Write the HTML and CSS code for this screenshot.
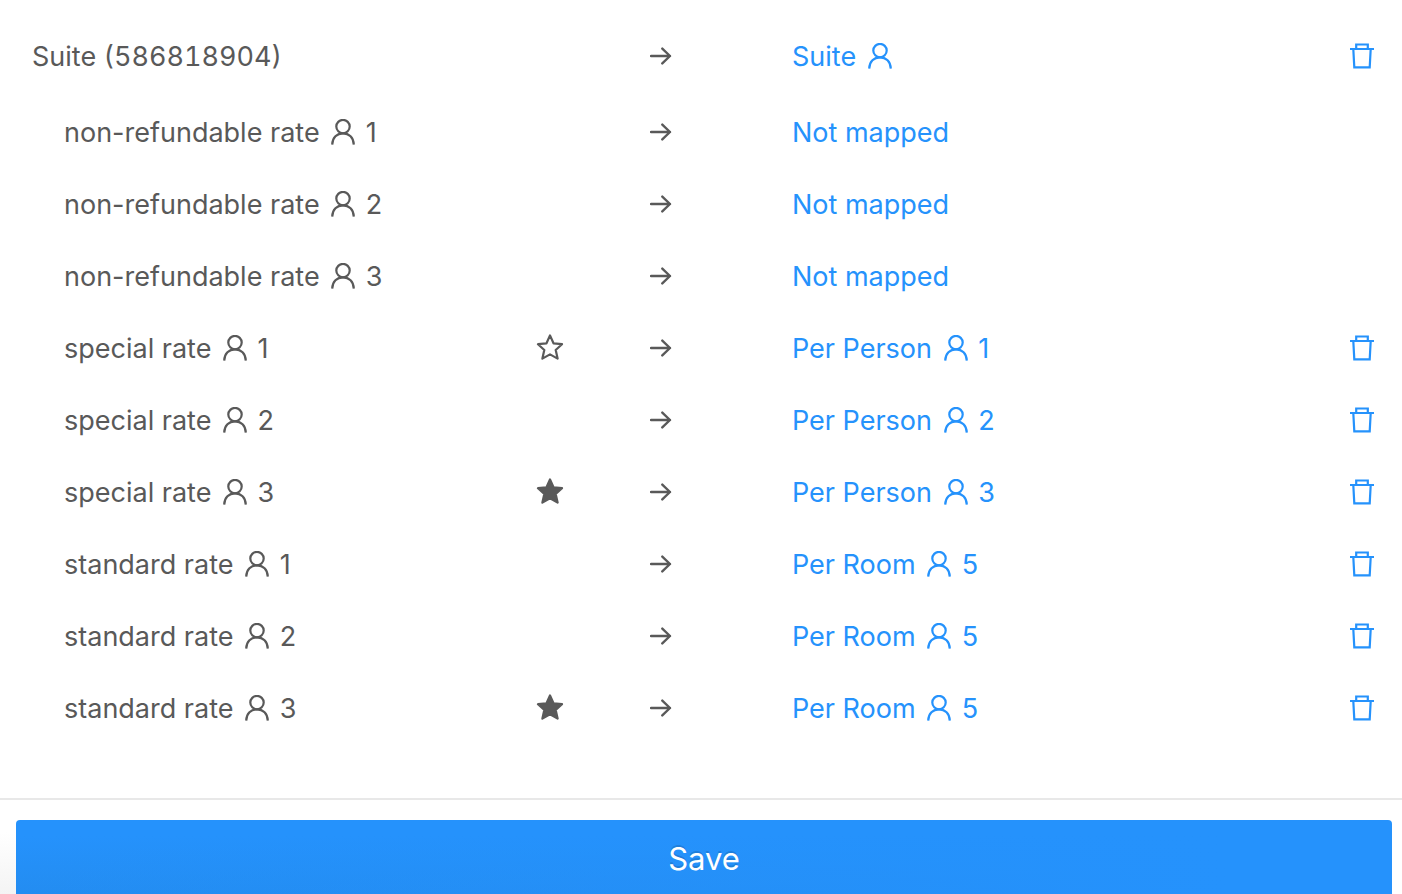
FILE: index.html
```html
<!DOCTYPE html>
<html lang="en">
<head>
<meta charset="utf-8">
<meta name="viewport" content="width=device-width, initial-scale=1">
<title>Rate mapping</title>
<link rel="stylesheet" href="styles.css">
</head>
<body>
<svg class="sprite" aria-hidden="true">
  <symbol id="person" viewBox="0 0 24 26"><circle cx="12" cy="7.6" r="6.7"/><path d="M1.2 25.6C1.4 18.6 6 14.3 12 14.3s10.600 4.300 10.800 11.300"/></symbol>
  <symbol id="arrow" viewBox="0 0 22 18"><path d="M1 9h19M12.300 1.600 20 9l-7.700 7.400"/></symbol>
  <symbol id="star" viewBox="0 0 28 28"><path d="M14 1.400l3.500 7.900 8.500 .9-6.300 5.800 1.900 8.600L14 20.400l-7.600 4.200 1.900-8.600L2 10.200l8.500-.9z"/></symbol>
  <symbol id="trash" viewBox="0 0 24 26"><path d="M0 6h24M6.200 6V1.500h11.600V6M3.300 6l1 18.300h15.400l1-18.300"/></symbol>
</svg>
<main class="page">
  <ul class="mapping">
    <li class="row row-room">
      <span class="source">Suite (586818904)</span>
      <svg class="arrow"><use href="#arrow"/></svg>
      <a class="target" href="#">Suite <svg class="person"><use href="#person"/></svg></a>
      <button class="icon-button remove" aria-label="Remove mapping"><svg class="trash"><use href="#trash"/></svg></button>
    </li>
    <li class="row">
      <span class="source">non-refundable rate <svg class="person"><use href="#person"/></svg> 1</span>
      <svg class="arrow"><use href="#arrow"/></svg>
      <a class="target" href="#">Not mapped</a>
    </li>
    <li class="row">
      <span class="source">non-refundable rate <svg class="person"><use href="#person"/></svg> 2</span>
      <svg class="arrow"><use href="#arrow"/></svg>
      <a class="target" href="#">Not mapped</a>
    </li>
    <li class="row">
      <span class="source">non-refundable rate <svg class="person"><use href="#person"/></svg> 3</span>
      <svg class="arrow"><use href="#arrow"/></svg>
      <a class="target" href="#">Not mapped</a>
    </li>
    <li class="row">
      <span class="source">special rate <svg class="person"><use href="#person"/></svg> 1</span>
      <button class="icon-button favorite" aria-label="Set as primary rate"><svg class="star"><use href="#star"/></svg></button>
      <svg class="arrow"><use href="#arrow"/></svg>
      <a class="target" href="#">Per Person <svg class="person"><use href="#person"/></svg> 1</a>
      <button class="icon-button remove" aria-label="Remove mapping"><svg class="trash"><use href="#trash"/></svg></button>
    </li>
    <li class="row">
      <span class="source">special rate <svg class="person"><use href="#person"/></svg> 2</span>
      <svg class="arrow"><use href="#arrow"/></svg>
      <a class="target" href="#">Per Person <svg class="person"><use href="#person"/></svg> 2</a>
      <button class="icon-button remove" aria-label="Remove mapping"><svg class="trash"><use href="#trash"/></svg></button>
    </li>
    <li class="row">
      <span class="source">special rate <svg class="person"><use href="#person"/></svg> 3</span>
      <button class="icon-button favorite" aria-label="Primary rate" aria-pressed="true"><svg class="star star-filled"><use href="#star"/></svg></button>
      <svg class="arrow"><use href="#arrow"/></svg>
      <a class="target" href="#">Per Person <svg class="person"><use href="#person"/></svg> 3</a>
      <button class="icon-button remove" aria-label="Remove mapping"><svg class="trash"><use href="#trash"/></svg></button>
    </li>
    <li class="row">
      <span class="source">standard rate <svg class="person"><use href="#person"/></svg> 1</span>
      <svg class="arrow"><use href="#arrow"/></svg>
      <a class="target" href="#">Per Room <svg class="person"><use href="#person"/></svg> 5</a>
      <button class="icon-button remove" aria-label="Remove mapping"><svg class="trash"><use href="#trash"/></svg></button>
    </li>
    <li class="row">
      <span class="source">standard rate <svg class="person"><use href="#person"/></svg> 2</span>
      <svg class="arrow"><use href="#arrow"/></svg>
      <a class="target" href="#">Per Room <svg class="person"><use href="#person"/></svg> 5</a>
      <button class="icon-button remove" aria-label="Remove mapping"><svg class="trash"><use href="#trash"/></svg></button>
    </li>
    <li class="row">
      <span class="source">standard rate <svg class="person"><use href="#person"/></svg> 3</span>
      <button class="icon-button favorite" aria-label="Primary rate" aria-pressed="true"><svg class="star star-filled"><use href="#star"/></svg></button>
      <svg class="arrow"><use href="#arrow"/></svg>
      <a class="target" href="#">Per Room <svg class="person"><use href="#person"/></svg> 5</a>
      <button class="icon-button remove" aria-label="Remove mapping"><svg class="trash"><use href="#trash"/></svg></button>
    </li>
  </ul>
  <footer class="footer">
    <button class="save">Save</button>
  </footer>
</main>
</body>
</html>
```

FILE: styles.css
```css
* {
  box-sizing: border-box;
}

body {
  margin: 0;
  background: #fff;
  color: #595959;
  font: 27px/40px Inter, "Liberation Sans", sans-serif;
}

.sprite {
  position: absolute;
  width: 0;
  height: 0;
}

.mapping {
  margin: 0;
  padding: 16px 28px 54px 32px;
  list-style: none;
}

.row {
  display: grid;
  grid-template-columns: 504fr 114fr 142fr 558fr 24px;
  grid-template-rows: 72px;
  align-items: center;
}

.row-room {
  grid-template-rows: 80px;
}

.source,
.target {
  padding-top: 2px;
  white-space: nowrap;
}

.source {
  grid-column: 1;
  padding-left: 32px;
}

.row-room .source {
  padding-left: 0;
  font-variant-numeric: tabular-nums;
}

.favorite {
  grid-column: 2;
}

.arrow {
  grid-column: 3;
  width: 22px;
  height: 18px;
}

.target {
  grid-column: 4;
  color: #2592fc;
  text-decoration: none;
}

.icon-button {
  display: flex;
  justify-self: start;
  padding: 0;
  border: 0;
  background: none;
  color: inherit;
  cursor: pointer;
}

.remove {
  grid-column: 5;
  color: #2592fc;
}

.person,
.arrow,
.star,
.trash {
  fill: none;
  stroke: currentColor;
  stroke-width: 2.2;
}

.person {
  width: 24px;
  height: 26px;
  margin: 0 3px 0 4px;
  vertical-align: -3px;
}

.arrow {
  stroke-width: 2.4;
  stroke-linecap: round;
  stroke-linejoin: round;
}

.star {
  width: 28px;
  height: 28px;
  stroke-linejoin: round;
}

.star-filled {
  fill: currentColor;
}

.trash {
  width: 24px;
  height: 26px;
}

.footer {
  height: 96px;
  padding: 20px 10px 0 16px;
  border-top: 2px solid #e8e8e8;
  background: linear-gradient(#fff 32px, #f4f4f4) left / 16px 100% no-repeat;
  overflow: hidden;
}

.save {
  width: 100%;
  height: 78px;
  padding: 0;
  border: 0;
  border-radius: 4px;
  background: linear-gradient(90deg, #2592fc00, #2592fc 88%), linear-gradient(#2592fc 16px, #238cf0);
  color: #fff;
  font: 31px/78px Inter, "Liberation Sans", sans-serif;
  text-shadow: 0 -2px 0 rgba(0, 0, 0, 0.12);
  cursor: pointer;
}
```
